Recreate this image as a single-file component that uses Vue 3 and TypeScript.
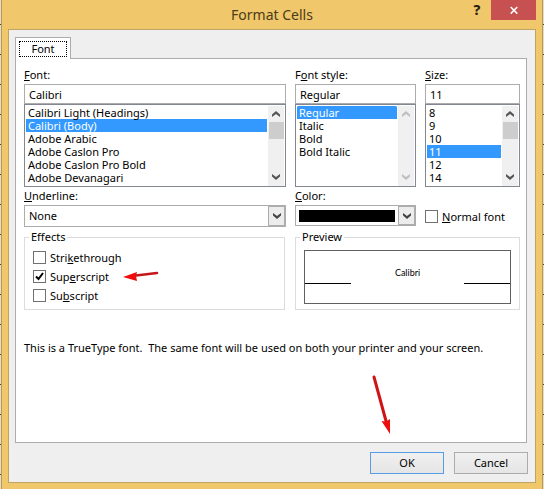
<script setup lang="ts">
import { ref } from 'vue'

const fonts: string[] = [
  'Calibri Light (Headings)',
  'Calibri (Body)',
  'Adobe Arabic',
  'Adobe Caslon Pro',
  'Adobe Caslon Pro Bold',
  'Adobe Devanagari',
]
const styles: string[] = ['Regular', 'Italic', 'Bold', 'Bold Italic']
const sizes: string[] = ['8', '9', '10', '11', '12', '14']

const fontName = ref('Calibri')
const fontChoice = ref('Calibri (Body)')
const fontStyle = ref('Regular')
const fontSize = ref('11')
const underline = ref('None')
const color = ref('Black')
const normalFont = ref(false)
const strikethrough = ref(false)
const superscript = ref(true)
const subscript = ref(false)
</script>

<template>
  <div class="desktop">
    <main class="window">
      <header class="titlebar">
        <h1>Format Cells</h1>
        <div class="captions">
          <button class="help" type="button" aria-label="Help">?</button>
          <button class="close" type="button" aria-label="Close">
            <svg width="10" height="10" viewBox="0 0 10 10"><path d="M1.700 2l6.600 6.600M8.300 2L1.700 8.600" stroke="#fff" stroke-width="1.500" /></svg>
          </button>
        </div>
      </header>

      <form class="client" @submit.prevent>
        <div class="tabs" role="tablist">
          <button class="tab" type="button" role="tab" aria-selected="true"><span>Font</span></button>
        </div>

        <section class="panel">
          <div class="columns">
            <div class="field">
              <label for="font"><u>F</u>ont:</label>
              <input id="font" v-model="fontName" class="text" type="text" />
              <div class="list">
                <select v-model="fontChoice" size="6" aria-label="Fonts">
                  <option v-for="f in fonts" :key="f">{{ f }}</option>
                </select>
                <div class="scroll">
                  <svg width="8" height="6" viewBox="0 0 8 6"><path d="M0 6V3.500L4 0l4 3.500V6L4 3z" /></svg>
                  <i class="thumb"></i>
                  <svg width="8" height="6" viewBox="0 0 8 6"><path d="M0 0v2.500L4 6l4-3.500V0L4 3z" /></svg>
                </div>
              </div>
            </div>

            <div class="field">
              <label for="style">F<u>o</u>nt style:</label>
              <input id="style" v-model="fontStyle" class="text" type="text" />
              <div class="list">
                <select v-model="fontStyle" size="6" aria-label="Font styles">
                  <option v-for="s in styles" :key="s">{{ s }}</option>
                </select>
                <div class="scroll disabled">
                  <svg width="8" height="6" viewBox="0 0 8 6"><path d="M0 6V3.500L4 0l4 3.500V6L4 3z" /></svg>
                  <svg width="8" height="6" viewBox="0 0 8 6"><path d="M0 0v2.500L4 6l4-3.500V0L4 3z" /></svg>
                </div>
              </div>
            </div>

            <div class="field">
              <label for="size"><u>S</u>ize:</label>
              <input id="size" v-model="fontSize" class="text" type="text" />
              <div class="list">
                <select v-model="fontSize" size="6" aria-label="Sizes">
                  <option v-for="s in sizes" :key="s">{{ s }}</option>
                </select>
                <div class="scroll">
                  <svg width="8" height="6" viewBox="0 0 8 6"><path d="M0 6V3.500L4 0l4 3.500V6L4 3z" /></svg>
                  <i class="thumb"></i>
                  <svg width="8" height="6" viewBox="0 0 8 6"><path d="M0 0v2.500L4 6l4-3.500V0L4 3z" /></svg>
                </div>
              </div>
            </div>

            <div class="field">
              <label for="underline"><u>U</u>nderline:</label>
              <div class="combo">
                <select id="underline" v-model="underline">
                  <option>None</option>
                  <option>Single</option>
                  <option>Double</option>
                </select>
                <span class="drop"><svg width="8" height="6" viewBox="0 0 8 6"><path d="M0 0v2.500L4 6l4-3.500V0L4 3z" /></svg></span>
              </div>
            </div>

            <div class="field">
              <label for="color"><u>C</u>olor:</label>
              <div class="combo swatch">
                <select id="color" v-model="color">
                  <option>Black</option>
                </select>
                <span class="drop"><svg width="8" height="6" viewBox="0 0 8 6"><path d="M0 0v2.500L4 6l4-3.500V0L4 3z" /></svg></span>
              </div>
            </div>

            <label class="check normal"><input v-model="normalFont" type="checkbox" /><span><u>N</u>ormal font</span></label>

            <fieldset class="effects">
              <legend>Effects</legend>
              <label class="check"><input v-model="strikethrough" type="checkbox" /><span>Stri<u>k</u>ethrough</span></label>
              <label class="check"><input v-model="superscript" type="checkbox" /><span>Sup<u>e</u>rscript</span></label>
              <label class="check"><input v-model="subscript" type="checkbox" /><span>Su<u>b</u>script</span></label>
              <svg class="arrow-left" width="38" height="12" viewBox="0 0 38 12">
                <path d="M34 2L13 4.500" stroke="#c4161c" stroke-width="2.600" stroke-linecap="round" />
                <path d="M0 6L14 1l-1 4 1 5z" fill="#ee0c0c" />
              </svg>
            </fieldset>

            <fieldset class="preview">
              <legend>Preview</legend>
              <div class="sample"><i></i><span>Calibri</span><i></i></div>
            </fieldset>
          </div>

          <p class="note">This is a TrueType font.&nbsp; The same font will be used on both your printer and your screen.</p>
          <svg class="arrow-down" width="20" height="60" viewBox="0 0 20 60">
            <path d="M2 2L14 46" stroke="#cf1418" stroke-width="3" stroke-linecap="round" />
            <path d="M18 59L9.500 46l4.500 .5 4-2.500z" fill="#ee0c0c" />
          </svg>
        </section>

        <footer class="actions">
          <button class="push default" type="submit">OK</button>
          <button class="push" type="button">Cancel</button>
        </footer>
      </form>
    </main>
  </div>
</template>

<style>
body {
  margin: 0;
}
</style>

<style scoped>
* {
  box-sizing: border-box;
}
.desktop {
  min-height: 100vh;
  display: flex;
  padding: 0 1px;
  background: repeating-linear-gradient(#e9dcb8 0 24px, #4a4232 24px 25px, #e9dcb8 25px 30px);
  font: 11px/14px "Noto Sans", "Open Sans", sans-serif;
  color: #000;
}
button,
input,
select {
  margin: 0;
  font: inherit;
  color: inherit;
  outline: none;
}
.window {
  flex: 1;
  min-width: 0;
  display: flex;
  flex-direction: column;
  padding: 0 6px 6px;
  background: #f0c76a;
  border: solid #b39a62;
  border-width: 0 1px;
}
.titlebar {
  position: relative;
  height: 29px;
  flex: none;
}
h1 {
  margin: 0;
  font: 14px/29px "Noto Sans", "Open Sans", sans-serif;
  color: #4b3c1b;
  text-align: center;
}
.captions {
  position: absolute;
  top: 0;
  right: 0;
  display: flex;
}
.captions button {
  height: 20px;
  padding: 0;
  border: 0;
  background: none;
}
.captions .help {
  width: 28px;
  font-size: 14px;
  font-weight: 800;
  color: #2b2110;
}
.captions .close {
  width: 45px;
  background: #c75050;
  display: flex;
  align-items: center;
  justify-content: center;
}
.client {
  flex: 1;
  display: flex;
  flex-direction: column;
  padding: 7px 8px 8px 6px;
  background: #efefef;
  border: 1px solid #bda465;
}
.tabs {
  display: flex;
  z-index: 1;
  margin-bottom: -1px;
}
.tab {
  width: 56px;
  height: 22px;
  padding: 3px;
  border: 1px solid #acacac;
  border-bottom: 0;
  background: #fff;
}
.tab span {
  display: block;
  border: 1px dotted #000;
  line-height: 14px;
}
.panel {
  position: relative;
  flex: 1;
  padding: 9px 6px 0 8px;
  border: 1px solid #acacac;
  background: #fff;
}
.columns {
  display: grid;
  grid-template-columns: 1fr 121px 95px;
  column-gap: 9px;
}
.field {
  display: flex;
  flex-direction: column;
}
.field > label {
  height: 16px;
}
.text {
  width: 100%;
  height: 20px;
  padding: 0 4px;
  border: 1px solid #acacac;
  background: #fff;
}
.list {
  display: flex;
  height: 83px;
  margin-bottom: 2px;
  padding: 1px 1px 0;
  border: 1px solid #828790;
}
.list select {
  flex: 1;
  min-width: 0;
  height: 80px;
  padding: 0;
  border: 0;
  background: #fff;
  scrollbar-width: none;
  overflow: hidden;
}
.list option {
  display: flex;
  align-items: center;
  height: 13px;
  min-height: 13px;
  padding: 0 2px;
  line-height: 13px;
}
.list option:checked {
  background: #3399ff linear-gradient(#3399ff, #3399ff);
  color: #fff;
  -webkit-text-fill-color: #fff;
}
.scroll {
  width: 16px;
  margin-left: 1px;
  display: flex;
  flex-direction: column;
  align-items: center;
  padding: 5px 0 6px;
  background: #f0f0f0;
}
.scroll svg {
  flex: none;
  fill: #555;
}
.scroll svg:last-child {
  margin-top: auto;
}
.scroll.disabled svg {
  fill: #bfbfbf;
}
.thumb {
  width: 15px;
  height: 17px;
  margin-top: 5px;
  background: #cdcdcd;
}
.combo {
  display: flex;
  position: relative;
  height: 22px;
  border: 1px solid #acacac;
}
.combo select {
  appearance: none;
  width: 100%;
  padding: 0 20px 0 4px;
  border: 0;
  background: none;
}
.drop {
  position: absolute;
  inset: 0 0 0 auto;
  width: 17px;
  display: flex;
  align-items: center;
  justify-content: center;
  border: 1px solid #acacac;
  background: #ececec;
  pointer-events: none;
}
.drop svg {
  fill: #444;
}
.swatch {
  height: 21px;
}
.swatch select {
  margin: 4px 20px 3px 3px;
  width: auto;
  flex: 1;
  background: #000;
}
.check {
  display: flex;
  align-items: center;
  gap: 4px;
  height: 19px;
}
.check input {
  appearance: none;
  width: 13px;
  height: 13px;
  border: 1px solid #707070;
  background: #fff;
}
.check input:checked {
  background: #fff url("data:image/svg+xml,%3Csvg xmlns='http://www.w3.org/2000/svg' viewBox='0 0 11 11'%3E%3Cpath d='M2 5.500L4.500 8 9 2' fill='none' stroke='%23000' stroke-width='2'/%3E%3C/svg%3E") center / 11px 11px;
}
.normal {
  align-self: end;
  padding-bottom: 2px;
}
fieldset {
  position: relative;
  min-width: 0;
  margin: 2px 0 0;
  padding: 0 8px;
  border: 1px solid #dcdcdc;
  height: 81px;
}
legend {
  margin-left: -4px;
  padding: 0 2px;
  line-height: 16px;
}
.effects {
  margin-right: 1px;
}
.effects legend + .check {
  margin-top: 3px;
}
.preview {
  grid-column: span 2;
}
.sample {
  display: flex;
  height: 54px;
  margin-top: 5px;
  border: 1px solid #606060;
  justify-content: space-between;
}
.sample i {
  width: 46px;
  height: 33px;
  border-bottom: 1px solid #000;
}
.sample span {
  font: 9px/44px Lato, sans-serif;
}
.arrow-left {
  position: absolute;
  left: 98px;
  top: 26px;
}
.note {
  margin: 31px 0 0;
  white-space: nowrap;
}
.arrow-down {
  position: absolute;
  right: 134px;
  bottom: 7px;
}
.actions {
  display: flex;
  justify-content: flex-end;
  gap: 10px;
  padding-top: 9px;
  margin-right: -1px;
}
.push {
  width: 74px;
  height: 22px;
  padding: 0;
  border: 1px solid #acacac;
  background: linear-gradient(#f0f0f0, #e5e5e5);
}
.push.default {
  border-color: #569de5;
}
</style>
